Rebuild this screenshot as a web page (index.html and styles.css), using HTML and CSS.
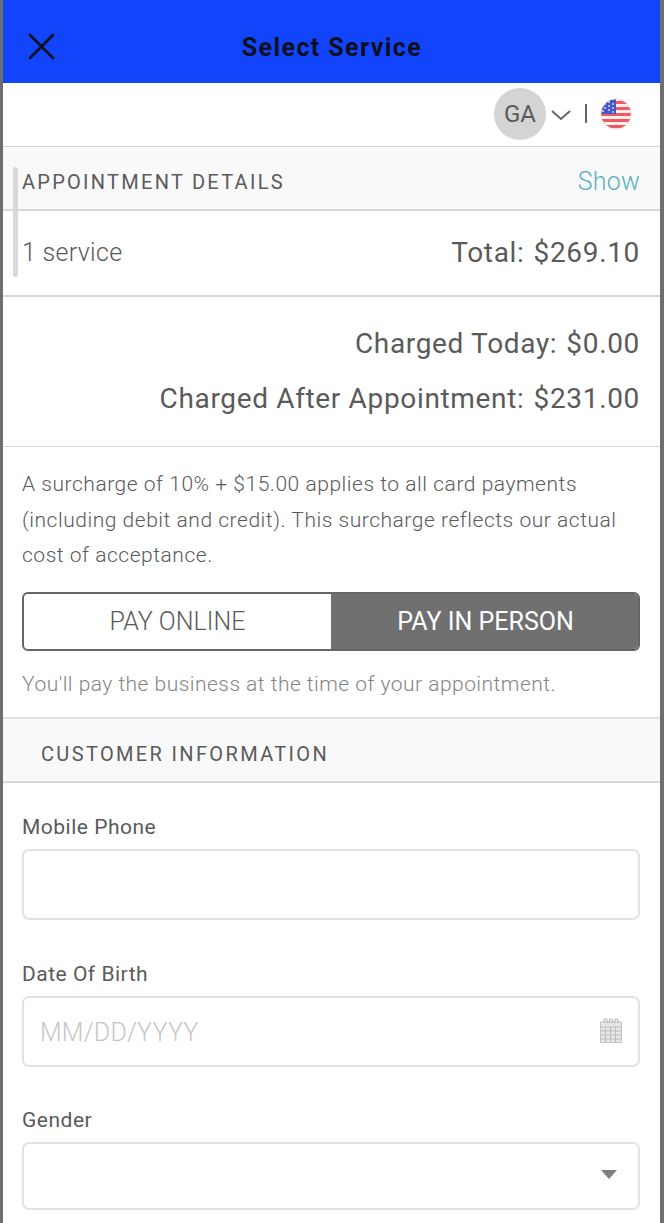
FILE: index.html
```html
<!DOCTYPE html>
<html lang="en">
<head>
<meta charset="utf-8">
<title>Select Service</title>
<link rel="stylesheet" href="styles.css">
</head>
<body>
<div class="frame">
  <header class="topbar">
    <svg class="close" width="28" height="28" viewBox="0 0 28 28"><path d="M3 3 L26 26 M26 3 L3 26" fill="none" stroke="#0b0f1e" stroke-width="2.6" stroke-linecap="round"/></svg>
    <h1 class="title">Select Service</h1>
  </header>
  <div class="toolbar">
    <span class="avatar">GA</span>
    <svg class="chev" width="22" height="12" viewBox="0 0 22 12"><path d="M2 2 L11 10 L20 2" fill="none" stroke="#666" stroke-width="2"/></svg>
    <span class="sep"></span>
    <svg class="flag" width="32" height="32" viewBox="0 0 32 32">
      <defs><clipPath id="fc"><circle cx="16" cy="16" r="15"/></clipPath></defs>
      <g clip-path="url(#fc)">
        <rect width="32" height="32" fill="#fbeeee"/>
        <path d="M0 3h32v3H0zM0 9h32v3H0zM0 15h32v3H0zM0 21h32v3H0zM0 27h32v3H0z" fill="#ee5a5f"/>
        <rect x="0" y="0" width="16" height="16" fill="#4658c8"/>
        <g fill="#dfe3fa"><circle cx="5" cy="6" r=".9"/><circle cx="9" cy="4" r=".9"/><circle cx="13" cy="6" r=".9"/><circle cx="5" cy="10" r=".9"/><circle cx="9" cy="8" r=".9"/><circle cx="13" cy="10" r=".9"/><circle cx="3" cy="13" r=".9"/><circle cx="9" cy="12" r=".9"/><circle cx="13" cy="14" r=".9"/></g>
      </g>
      <circle cx="16" cy="16" r="15.3" fill="none" stroke="#f3dcdc" stroke-width="1"/>
    </svg>
  </div>
  <section class="band band-first">
    <span class="band-label">APPOINTMENT DETAILS</span>
    <a class="show">Show</a>
  </section>
  <div class="summary">
    <span class="count">1 service</span>
    <span class="money">Total: <span class="amount">$269.10</span></span>
  </div>
  <div class="charges">
    <div class="money">Charged Today: <span class="amount">$0.00</span></div>
    <div class="money">Charged After Appointment: <span class="amount">$231.00</span></div>
  </div>
  <div class="payment">
    <p class="note">A surcharge of 10% + $15.00 applies to all card payments (including debit and credit). This surcharge reflects our actual cost of acceptance.</p>
    <div class="toggle">
      <span class="opt">PAY ONLINE</span>
      <span class="opt opt-on">PAY IN PERSON</span>
    </div>
    <p class="hint">You'll pay the business at the time of your appointment.</p>
  </div>
  <section class="band band-info">
    <span class="band-label band-label-wide">CUSTOMER INFORMATION</span>
  </section>
  <form class="form">
    <div class="field">
      <label class="lbl">Mobile Phone</label>
      <div class="input"></div>
    </div>
    <div class="field">
      <label class="lbl">Date Of Birth</label>
      <div class="input">
        <span class="ph">MM/DD/YYYY</span>
        <svg class="cal" width="22" height="25" viewBox="0 0 22 25">
          <rect x=".5" y="4" width="21" height="20.5" fill="#e6e6e6" stroke="#c4c4c4"/>
          <path d="M.5 9h21M.5 13h21M.5 17h21M.5 21h21M5.500 9v15M10.500 9v15M15.500 9v15" stroke="#bdbdbd" stroke-width="1" fill="none"/>
          <path d="M4 5V2.500a1.500 1.500 0 0 1 3 0V5M9.500 5V2.500a1.500 1.500 0 0 1 3 0V5M15 5V2.500a1.500 1.500 0 0 1 3 0V5" stroke="#b5b5b5" stroke-width="1.200" fill="none"/>
        </svg>
      </div>
    </div>
    <div class="field">
      <label class="lbl">Gender</label>
      <div class="input input-select">
        <svg class="caret" width="16" height="9" viewBox="0 0 16 9"><path d="M0 0H16L8 9Z" fill="#7f7f7f"/></svg>
      </div>
    </div>
  </form>
  <div class="scroll-thumb"></div>
</div>
</body>
</html>
```
FILE: styles.css
```css
html, body { margin: 0; padding: 0; }
body { background: #fff; font-family: Roboto, "Liberation Sans", sans-serif; color: #5a5a5a; }
* { box-sizing: border-box; }
.frame { position: relative; width: 664px; height: 1223px; overflow: hidden; background: #fff; border-left: 3px solid #6e6e6e; border-right: 4px solid #6e6e6e; }
.topbar { position: relative; height: 83px; margin-right: -4px; background: #1245fb; display: flex; align-items: center; justify-content: center; padding: 11px 3px 0 0; }
.close { position: absolute; left: 24px; top: 32px; }
.title { margin: 0; font-size: 25px; font-weight: 700; letter-spacing: 1.4px; color: #0b0f1e; }
.toolbar { height: 64px; border-bottom: 1px solid #d6d6d6; display: flex; align-items: center; justify-content: flex-end; padding: 0 28px 2px 0; }
.avatar { width: 52px; height: 52px; border-radius: 50%; background: #d4d4d4; display: flex; align-items: center; justify-content: center; font-size: 24px; color: #5a5a5a; }
.chev { margin-left: 4px; margin-top: 2px; }
.sep { width: 2px; height: 19px; background: #666; margin-left: 13px; }
.flag { margin-left: 13px; }
.band { background: #f9f9f9; border-bottom: 2px solid #d8d8d8; display: flex; align-items: center; justify-content: space-between; }
.band-first { height: 64px; padding: 7px 20px 0 19px; }
.band-info { height: 66px; padding: 8px 20px 0 38px; border-top: 2px solid #e2e2e2; }
.band-label { font-size: 20px; letter-spacing: 2.27px; color: #5a5a5a; }
.band-label-wide { letter-spacing: 2.35px; }
.show { font-size: 25px; font-weight: 300; letter-spacing: .2px; color: #58b1bd; }
.summary { height: 86px; border-bottom: 2px solid #d8d8d8; display: flex; align-items: center; justify-content: space-between; padding: 0 20px 2px 19px; }
.count { font-size: 25px; font-weight: 300; letter-spacing: .3px; color: #5a5a5a; }
.money { font-size: 28px; letter-spacing: .66px; color: #5a5a5a; }
.amount { margin-left: 1.500px; }
.charges { height: 150px; border-bottom: 1px solid #d8d8d8; padding: 29px 20px 0 19px; text-align: right; display: flex; flex-direction: column; gap: 20px; }
.charges .money { line-height: 35px; }
.payment { height: 270px; padding: 20px 20px 0 19px; }
.note { margin: 0; font-size: 21px; font-weight: 300; line-height: 35.5px; letter-spacing: .53px; color: #5a5a5a; }
.toggle { margin-top: 18px; height: 59px; display: flex; border: 2px solid #666; border-radius: 6px; overflow: hidden; }
.opt { width: 307px; display: flex; align-items: center; justify-content: center; font-size: 25px; font-weight: 300; color: #5a5a5a; }
.opt-on { flex: 1; padding-left: 2px; background: #707070; color: #fff; font-weight: 400; }
.hint { margin: 16px 0 0; font-size: 21px; font-weight: 300; letter-spacing: .47px; line-height: 35px; color: #858585; }
.form { padding: 26px 20px 0 19px; display: flex; flex-direction: column; gap: 35.500px; }
.lbl { display: block; font-size: 21px; letter-spacing: .5px; line-height: 36px; color: #5a5a5a; margin-bottom: 4px; }
.input { position: relative; height: 71px; border: 2px solid #e2e2e2; border-radius: 7px; display: flex; align-items: center; padding: 2px 16px 0; background: #fff; }
.input-select { height: 68px; }
.ph { font-size: 25px; font-weight: 300; letter-spacing: .2px; color: #c6c6c6; }
.cal { position: absolute; right: 16px; top: 20px; }
.caret { position: absolute; right: 21px; top: 26px; }
.scroll-thumb { position: absolute; left: 10px; top: 167px; width: 5px; height: 110px; border-radius: 3px; background: #d9d9d9; }
```
